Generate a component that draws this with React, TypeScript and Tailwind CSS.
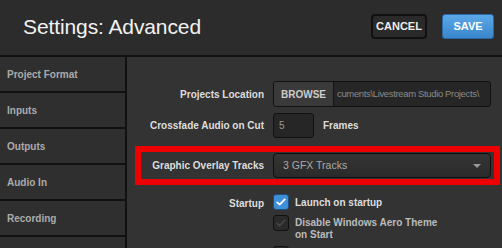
import React from "react";

const NAV = ["Project Format", "Inputs", "Outputs", "Audio In", "Recording", ""];

function Check({ color }: { color: string }) {
  return (
    <svg viewBox="0 0 16 16" className="w-[12px] h-[12px]">
      <path d="M3 8.5l3.2 3L13 4.5" fill="none" stroke={color} strokeWidth="2.4" strokeLinecap="round" strokeLinejoin="round" />
    </svg>
  );
}

export default function App() {
  return (
    <div
      className="relative w-[502px] h-[248px] overflow-hidden bg-[#333333] flex flex-col"
      style={{ fontFamily: '"Liberation Sans", Arial, sans-serif' }}
    >
      {/* header */}
      <div className="h-[57px] shrink-0 bg-[#2c2c2c] border-b-2 border-[#111111] flex items-center justify-between pl-[23px] pr-[8px]">
        <div className="text-[21px] text-[#f2f2f2] leading-none -mt-[3px] tracking-[-0.1px]">Settings: Advanced</div>
        <div className="flex items-center gap-[15px] -mt-[3px]">
          <button className="h-[25px] w-[56px] rounded-[4px] border-2 border-[#111111] bg-[#2a2a2a] text-[11px] font-bold text-[#eeeeee]">
            CANCEL
          </button>
          <button className="h-[25px] w-[52px] rounded-[3px] border border-[#2a6aa6] bg-gradient-to-b from-[#5aa8e8] to-[#3a86cc] text-[11px] font-bold text-white">
            SAVE
          </button>
        </div>
      </div>

      <div className="flex flex-1 min-h-0">
        {/* sidebar */}
        <div className="w-[127px] shrink-0 border-r-2 border-[#111111] flex flex-col bg-[#111111] gap-[2px]">
          {NAV.map((n, i) => (
            <div
              key={i}
              className="h-[34px] shrink-0 bg-[#2f2f2f] flex items-center pl-[7px] text-[10px] font-bold text-[#ababab]"
            >
              {n}
            </div>
          ))}
        </div>

        {/* main */}
        <div className="flex-1 pt-[24px] pr-[11px]">
          <div className="grid grid-cols-[137px_1fr] gap-x-[9px] items-center text-[10px] font-bold text-[#dddddd]">
            <div className="text-right">Projects Location</div>
            <div className="h-[26px] flex rounded-[3px] border border-[#111111] bg-[#262626] overflow-hidden">
              <div className="w-[60px] shrink-0 bg-[#3a3a3a] border-r border-[#151515] flex items-center justify-center text-[#cccccc] text-[10px]">
                BROWSE
              </div>
              <div className="flex-1 flex items-center pl-[3px] font-normal text-[9.5px] tracking-[-0.35px] text-[#8a8a8a] whitespace-nowrap overflow-hidden">
                cuments\Livestream Studio Projects\
              </div>
            </div>

            <div className="text-right mt-[6px]">Crossfade Audio on Cut</div>
            <div className="flex items-center gap-[9px] mt-[6px]">
              <div className="h-[25px] w-[41px] rounded-[3px] border border-[#111111] bg-[#262626] flex items-center pl-[5px] font-normal text-[10px] text-[#999999]">
                5
              </div>
              <span>Frames</span>
            </div>

            <div className="text-right mt-[15px]">Graphic Overlay Tracks</div>
            <div className="mt-[15px] h-[25px] rounded-[4px] border border-[#0e0e0e] bg-gradient-to-b from-[#353535] to-[#2a2a2a] flex items-center justify-between pl-[9px] pr-[9px] font-normal text-[10.5px] text-[#aaaaaa]">
              <span>3 GFX Tracks</span>
              <span className="w-0 h-0 border-l-[4px] border-r-[4px] border-t-[4px] border-l-transparent border-r-transparent border-t-[#999999]" />
            </div>

            <div className="text-right mt-[16px] self-start pt-[2px]">Startup</div>
            <div className="mt-[16px] flex flex-col gap-[5px]">
              <div className="flex items-center gap-[6px]">
                <div className="w-[16px] h-[16px] rounded-[3px] bg-[#3d8fd8] border border-[#1d4f80] flex items-center justify-center">
                  <Check color="#ffffff" />
                </div>
                <span>Launch on startup</span>
              </div>
              <div className="flex items-start gap-[6px]">
                <div className="w-[16px] h-[16px] shrink-0 rounded-[3px] bg-[#2a2a2a] border border-[#111111] flex items-center justify-center">
                  <Check color="#444444" />
                </div>
                <span className="leading-[12px] text-[#bbbbbb] pt-[2px]">
                  Disable Windows Aero Theme
                  <br />
                  on Start
                </span>
              </div>
              <div className="w-[16px] h-[16px] rounded-[3px] bg-[#2a2a2a] border border-[#111111]" />
            </div>
          </div>
        </div>
      </div>

      {/* annotation */}
      <div className="absolute left-[135px] top-[146px] w-[365px] h-[39px] border-[6px] border-[#ee0000]" />
    </div>
  );
}
